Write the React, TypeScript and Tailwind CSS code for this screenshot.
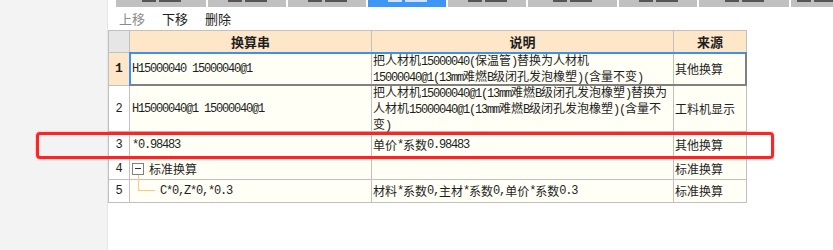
import React from "react";

const line = "border-[#c0c0c0]";

// ascii runs in a narrow mono so that digits keep the half-width look
function Mx({ t }: { t: string }) {
  return (
    <>
      {t.split(/([\x20-\x7e]+)/).map((s, i) =>
        /^[\x20-\x7e]+$/.test(s) ? (
          <span key={i} className="font-['Liberation_Mono'] text-[12px] tracking-[-1.2px]">
            {s}
          </span>
        ) : (
          <span key={i}>{s}</span>
        )
      )}
    </>
  );
}

// only the bottom edge of the tab strip shows
const tabs = [
  "w-[90px] bg-[#c0c0c0]",
  "w-[78px] bg-[#c0c0c0]",
  "w-[78px] bg-[#c0c0c0]",
  "w-[78px] bg-[#3d95f5]",
  "w-[78px] bg-[#c0c0c0]",
  "w-[89px] bg-[#c0c0c0]",
  "w-[78px] bg-[#c0c0c0]",
  "w-[90px] bg-[#c0c0c0]",
  "w-[50px] bg-[#c0c0c0]",
];

export default function App() {
  return (
    <div className="relative flex w-[833px] h-[250px] bg-white overflow-hidden font-['Noto_Sans_CJK_SC',sans-serif] text-[#1e1e1e]">
      {/* left panel */}
      <div className="w-[108px] shrink-0 bg-[#f3f3f3] border-r border-[#e6e6e6]" />

      <div className="flex flex-col flex-1">
        <div className="flex h-[7px] pl-[8px] gap-[2px]">
          {tabs.map((cls, i) => (
            <div key={i} className={`h-[7px] shrink-0 flex items-start justify-center gap-[3px] ${cls}`}>
              <div className={`h-[2px] w-[14px] ${i === 3 ? "bg-[#cfe3fb]" : "bg-[#555]"}`} />
              <div className={`h-[2px] w-[22px] ${i === 3 ? "bg-[#cfe3fb]" : "bg-[#555]"}`} />
            </div>
          ))}
        </div>

        {/* toolbar */}
        <div className="flex items-center h-[23px] pl-[11px] gap-[17px] text-[13px]">
          <span className="text-[#8c8c8c]">上移</span>
          <span>下移</span>
          <span>删除</span>
        </div>

        {/* grid */}
        <div className={`w-[639px] border-l border-t ${line} text-[12px] leading-[14px]`}>
          {/* header */}
          <div className="flex h-[21px] font-bold text-[13px]">
            <div className={`w-[21px] bg-[#e6e6e6] border-r ${line}`} />
            <div className={`w-[242px] bg-[#fee7c9] border-r ${line} flex items-center justify-center`}>换算串</div>
            <div className={`w-[302px] bg-[#fee7c9] border-r ${line} flex items-center justify-center`}>说明</div>
            <div className={`w-[73px] bg-[#fee7c9] border-r ${line} flex items-center justify-center`}>来源</div>
          </div>

          {/* row 1 - selected */}
          <div className="flex h-[34px]">
            <div className={`w-[20px] bg-[#fee7c9] border-t border-b ${line} flex items-center justify-center font-['Liberation_Mono'] font-bold text-[13px]`}>
              1
            </div>
            <div className="flex w-[618px] border-2 border-t-[#3d8ff0] border-l-[#3d8ff0] border-r-[#808080] border-b-[#808080]">
              <div className={`w-[241px] bg-[#fffff6] border-r ${line} flex items-center pl-[1px]`}>
                <Mx t="H15000040 15000040@1" />
              </div>
              <div className={`w-[302px] bg-[#fffff6] border-r ${line} flex items-center pl-[1px]`}>
                <div>
                  <Mx t="把人材机15000040(保温管)替换为人材机" />
                  <br />
                  <Mx t="15000040@1(13mm难燃B级闭孔发泡橡塑)(含量不变)" />
                </div>
              </div>
              <div className="flex-1 bg-[#fffff6] flex items-center pl-[1px]">其他换算</div>
            </div>
          </div>

          {/* row 2 */}
          <div className={`flex h-[46px] border-b ${line}`}>
            <div className={`w-[21px] bg-white border-r ${line} flex items-center justify-center font-['Liberation_Mono']`}>2</div>
            <div className={`w-[242px] bg-[#fffff6] border-r ${line} flex items-center pl-[2px]`}>
              <Mx t="H15000040@1 15000040@1" />
            </div>
            <div className={`w-[302px] bg-[#fffff6] border-r ${line} flex items-center pl-[1px]`}>
              <div>
                <Mx t="把人材机15000040@1(13mm难燃B级闭孔发泡橡塑)替换为" />
                <br />
                <Mx t="人材机15000040@1(13mm难燃B级闭孔发泡橡塑)(含量不" />
                <br />
                <Mx t="变)" />
              </div>
            </div>
            <div className={`w-[73px] bg-[#fffff6] border-r ${line} flex items-center pl-[1px]`}>工料机显示</div>
          </div>

          {/* row 3 */}
          <div className={`flex h-[26px] border-b ${line}`}>
            <div className={`w-[21px] bg-white border-r ${line} flex items-center justify-center font-['Liberation_Mono']`}>3</div>
            <div className={`w-[242px] bg-[#fffff6] border-r ${line} flex items-center pl-[2px]`}>
              <Mx t="*0.98483" />
            </div>
            <div className={`w-[302px] bg-[#fffff6] border-r ${line} flex items-center pl-[1px]`}>
              <Mx t="单价*系数0.98483" />
            </div>
            <div className={`w-[73px] bg-[#fffff6] border-r ${line} flex items-center pl-[1px]`}>其他换算</div>
          </div>

          {/* row 4 */}
          <div className={`flex h-[22px] border-b ${line}`}>
            <div className={`w-[21px] bg-white border-r ${line} flex items-center justify-center font-['Liberation_Mono']`}>4</div>
            <div className={`relative w-[242px] bg-[#fffff6] border-r ${line} flex items-center pl-[2px]`}>
              <div className="w-[12px] h-[12px] border border-[#808080] bg-white flex items-center justify-center">
                <div className="w-[6px] h-px bg-[#333]" />
              </div>
              <span className="ml-[5px]">标准换算</span>
              <div className="absolute left-[8px] top-[17px] bottom-[-1px] w-px bg-[#fcc97f]" />
            </div>
            <div className={`w-[302px] bg-[#fffff6] border-r ${line}`} />
            <div className={`w-[73px] bg-[#fffff6] border-r ${line} flex items-center pl-[1px]`}>标准换算</div>
          </div>

          {/* row 5 */}
          <div className={`flex h-[23px] border-b ${line}`}>
            <div className={`w-[21px] bg-white border-r ${line} flex items-center justify-center font-['Liberation_Mono']`}>5</div>
            <div className={`w-[242px] bg-[#fffff6] border-r ${line} flex items-center pl-[2px]`}>
              <div className="relative self-stretch w-[28px] shrink-0">
                <div className="absolute left-[6px] top-0 h-[11px] w-[17px] border-l border-b border-[#fcc97f]" />
              </div>
              <Mx t="C*0,Z*0,*0.3" />
            </div>
            <div className={`w-[302px] bg-[#fffff6] border-r ${line} flex items-center pl-[1px]`}>
              <Mx t="材料*系数0,主材*系数0,单价*系数0.3" />
            </div>
            <div className={`w-[73px] bg-[#fffff6] border-r ${line} flex items-center pl-[1px]`}>标准换算</div>
          </div>
        </div>
      </div>

      {/* red annotation box */}
      <div className="absolute left-[36px] top-[132px] w-[738px] h-[27px] border-[3px] border-[#ff2424] rounded-[4px] shadow-[0_0_2px_rgba(255,40,40,0.5)]" />
    </div>
  );
}
